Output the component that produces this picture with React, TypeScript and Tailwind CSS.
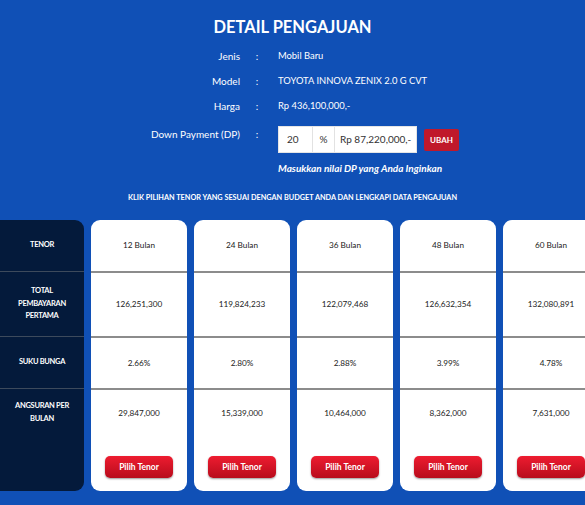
import React from "react";

const tenors = [
  { t: "12 Bulan", total: "126,251,300", bunga: "2.66%", ang: "29,847,000" },
  { t: "24 Bulan", total: "119,824,233", bunga: "2.80%", ang: "15,339,000" },
  { t: "36 Bulan", total: "122,079,468", bunga: "2.88%", ang: "10,464,000" },
  { t: "48 Bulan", total: "126,632,354", bunga: "3.99%", ang: "8,362,000" },
  { t: "60 Bulan", total: "132,080,891", bunga: "4.78%", ang: "7,631,000" },
];

function InfoRow({ label, value }: { label: string; value: string }) {
  return (
    <div className="flex h-[25px] items-center text-white">
      <div className="w-[240px] text-right text-[10px]">{label}</div>
      <div className="w-[34px] text-center text-[10px]">:</div>
      <div className="pl-[4px] text-[9.4px]">{value}</div>
    </div>
  );
}

export default function App() {
  return (
    <div
      className="w-[585px] h-[505px] overflow-hidden bg-[#1050b6] text-white"
      style={{ fontFamily: "Lato, 'Open Sans', sans-serif" }}
    >
      <div className="pt-[17px] text-center text-[16.5px] font-bold leading-[20px]">DETAIL PENGAJUAN</div>
      <div className="mt-[7px]">
        <InfoRow label="Jenis" value="Mobil Baru" />
        <InfoRow label="Model" value="TOYOTA INNOVA ZENIX 2.0 G CVT" />
        <InfoRow label="Harga" value="Rp 436,100,000,-" />
      </div>
      <div className="mt-[7px] flex items-start text-[10px]">
        <div className="w-[240px] pt-[2px] text-right leading-[12px]">Down Payment (DP)</div>
        <div className="w-[34px] pt-[2px] text-center leading-[12px]">:</div>
        <div className="pl-[4px]">
          <div className="flex items-center">
            <div className="flex h-[27px] w-[139px] border border-[#e5e5e5] bg-white text-[10px] text-[#333]">
              <div className="flex w-[34px] items-center pl-[8px] border-r border-[#e2e2e2]">20</div>
              <div className="flex w-[22px] items-center justify-center border-r border-[#e2e2e2]">%</div>
              <div className="flex flex-1 items-center pl-[5px]">Rp 87,220,000,-</div>
            </div>
            <div className="ml-[7px] flex h-[22px] w-[35px] items-center justify-center rounded-[2px] bg-[#c0182b] text-[8px] font-bold text-white">
              UBAH
            </div>
          </div>
          <div className="mt-[9px] text-[10px] font-bold italic leading-[12px] text-white">
            Masukkan nilai DP yang Anda Inginkan
          </div>
        </div>
      </div>
      <div className="mt-[19px] text-center text-[7.3px] font-bold leading-[10px]">
        KLIK PILIHAN TENOR YANG SESUAI DENGAN BUDGET ANDA DAN LENGKAPI DATA PENGAJUAN
      </div>
      <div className="mt-[17px] flex gap-[7px]">
        <div className="flex w-[84px] shrink-0 flex-col rounded-r-[9px] bg-[#041a3b] text-[7.5px] font-bold leading-[12.5px] tracking-[-0.3px] text-white">
          <div className="flex h-[51px] items-center justify-center text-center">TENOR</div>
          <div className="flex h-[65px] items-center justify-center border-t border-[#3d4a5c] text-center">
            TOTAL
            <br />
            PEMBAYARAN
            <br />
            PERTAMA
          </div>
          <div className="flex h-[52px] items-center justify-center border-t border-[#3d4a5c] text-center">SUKU BUNGA</div>
          <div className="h-[103px] border-t border-[#3d4a5c] pt-[11px] text-center">
            ANGSURAN PER
            <br />
            BULAN
          </div>
        </div>
        {tenors.map((x) => (
          <div
            key={x.t}
            className="flex w-[96px] shrink-0 flex-col rounded-[9px] bg-white text-[8.2px] text-[#1a1a1a]"
          >
            <div className="flex h-[51px] items-center justify-center">{x.t}</div>
            <div className="flex h-[65px] items-center justify-center border-t-2 border-[#8c8c8c]">{x.total}</div>
            <div className="flex h-[52px] items-center justify-center border-t-2 border-[#8c8c8c]">{x.bunga}</div>
            <div className="flex h-[103px] flex-col items-center border-t-2 border-[#8c8c8c] pt-[17px]">
              <div className="leading-[12px]">{x.ang}</div>
              <div className="mt-auto mb-[13px] flex h-[22px] w-[68px] items-center justify-center rounded-[5px] bg-gradient-to-b from-[#ee1c30] to-[#b80c1c] text-[8.5px] font-bold text-white shadow-[0_1px_2px_rgba(0,0,0,0.4)]">
                Pilih Tenor
              </div>
            </div>
          </div>
        ))}
      </div>
    </div>
  );
}
